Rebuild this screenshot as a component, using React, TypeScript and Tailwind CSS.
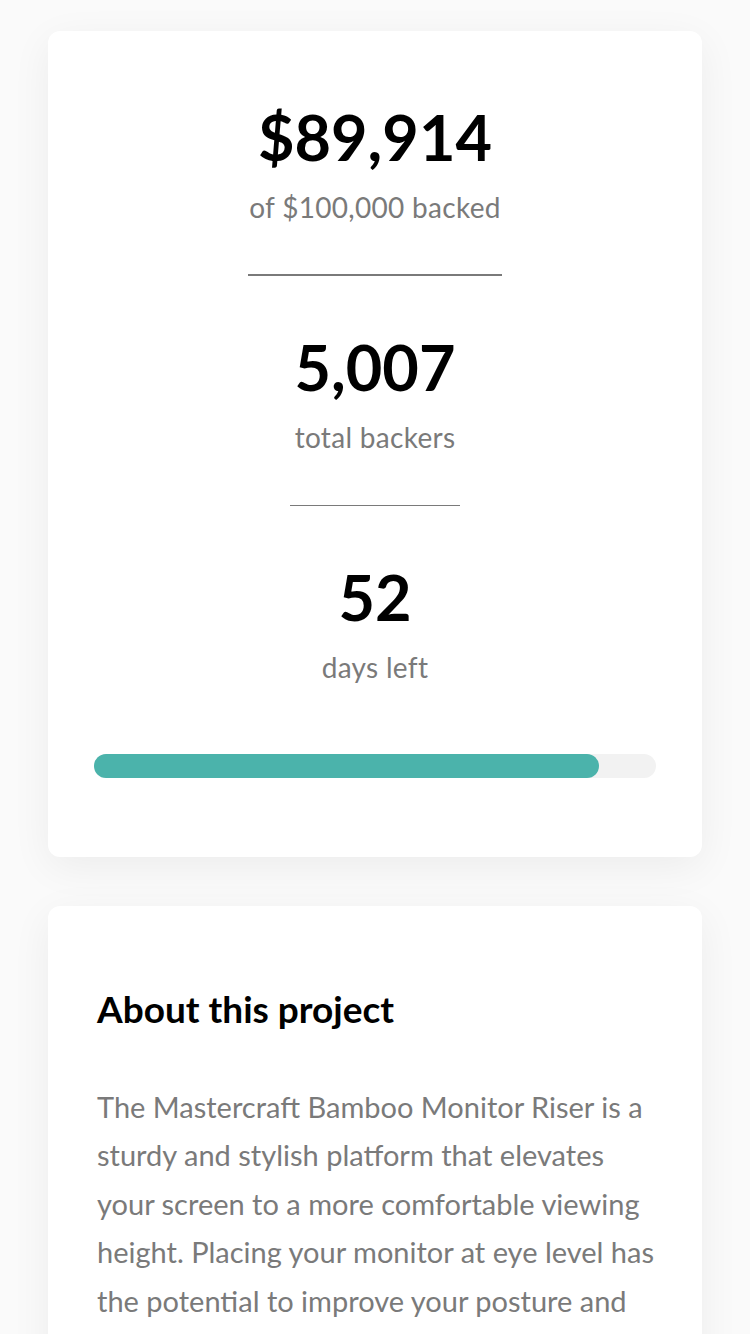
import React from 'react';

const font = { fontFamily: 'Lato, "Noto Sans", sans-serif' };

const Stat = ({ value, label }: { value: string; label: string }) => (
    <div className="flex flex-col items-center">
        <div className="text-[63px] leading-[72px] font-bold text-black">{value}</div>
        <div className="mt-[18px] text-[28px] leading-[32px] tracking-[0.3px] text-[#7a7a7a]">{label}</div>
    </div>
);

export default function App() {
    const percent = (89914 / 100000) * 100;

    return (
        <div className="min-h-[1334px] bg-[#fafafa] px-[48px] pt-[31px] pb-10" style={font}>
            <div className="rounded-[12px] bg-white px-[46px] pt-[70px] pb-[79px] shadow-[0_10px_40px_rgba(0,0,0,0.06)]">
                <div className="flex flex-col items-center">
                    <Stat value="$89,914" label="of $100,000 backed" />
                    <div className="mt-[51px] h-[1.5px] w-[254px] bg-[#7a7a7a]" />
                    <div className="mt-[55px]">
                        <Stat value="5,007" label="total backers" />
                    </div>
                    <div className="mt-[52px] h-[1.5px] w-[170px] bg-[#7a7a7a]" />
                    <div className="mt-[55px]">
                        <Stat value="52" label="days left" />
                    </div>
                </div>
                <div className="mt-[71px] h-[24px] w-full rounded-full bg-[#f2f2f2]">
                    <div
                        className="h-full rounded-full bg-[#4bb3ab]"
                        style={{ width: `${percent}%` }}
                    />
                </div>
            </div>

            <div className="mt-[49px] rounded-[12px] bg-white pl-[49px] pr-[40px] pt-[83px] pb-[60px] shadow-[0_10px_40px_rgba(0,0,0,0.06)]">
                <h2 className="text-[37px] leading-[40px] font-bold text-black">About this project</h2>
                <p className="mt-[54px] text-[29px] leading-[48.4px] text-[#7a7a7a]">
                    The Mastercraft Bamboo Monitor Riser is a sturdy and stylish platform that elevates your
                    screen to a more comfortable viewing height. Placing your monitor at eye level has the
                    potential to improve your posture and make you more comfortable while at work, helping
                    you stay focused on the task at hand.
                </p>
            </div>
        </div>
    );
}
